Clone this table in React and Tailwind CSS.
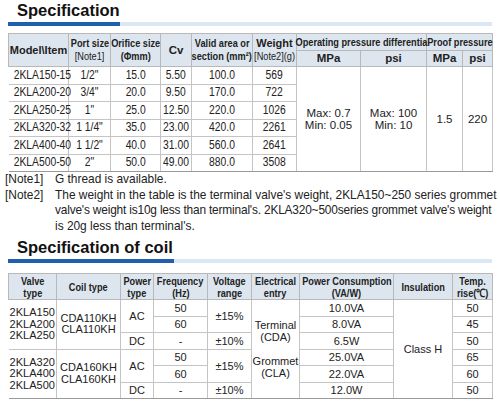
const spec = [
  ['2KLA150-15', '1/2"', '15.0', '5.50', '100.0', '569'],
  ['2KLA200-20', '3/4"', '20.0', '9.50', '170.0', '722'],
  ['2KLA250-25', '1"', '25.0', '12.50', '220.0', '1026'],
  ['2KLA320-32', '1 1/4"', '35.0', '23.00', '420.0', '2261'],
  ['2KLA400-40', '1 1/2"', '40.0', '31.00', '560.0', '2641'],
  ['2KLA500-50', '2"', '50.0', '49.00', '880.0', '3508'],
]

const coilGroups = [
  {
    models: ['2KLA150', '2KLA200', '2KLA250'],
    coils: ['CDA110KH', 'CLA110KH'],
    power: ['10.0VA', '8.0VA', '6.5W'],
    temp: ['50', '45', '50'],
  },
  {
    models: ['2KLA320', '2KLA400', '2KLA500'],
    coils: ['CDA160KH', 'CLA160KH'],
    power: ['25.0VA', '22.0VA', '12.0W'],
    temp: ['65', '60', '50'],
  },
]

// narrow type, like the catalogue's condensed face
function N({ children, className = '' }) {
  return <span className={`inline-block whitespace-nowrap scale-x-[0.8] ${className}`}>{children}</span>
}

function Head({ lines, className = '' }) {
  return (
    <div className={`flex flex-col items-center ${className}`}>
      {lines.map((l, i) => (
        <N key={i}>{l}</N>
      ))}
    </div>
  )
}

function Title({ children, bar }) {
  return (
    <div>
      <h2 className="h-5 pl-[17px] text-[16.5px] font-bold leading-5 text-[#111]">{children}</h2>
      <div className="ml-2 mt-[2px] flex h-1 w-[484px] bg-[#dbe7f3]">
        <div className={`h-full bg-[#1f5fae] ${bar}`} />
      </div>
    </div>
  )
}

const th = 'border border-[#b8b8b8] bg-[#dde6ef] p-0 align-middle font-bold text-[11.5px] text-[#222]'
const td = 'border-x border-b border-[#c4c4c4] p-0 text-center align-middle'

export default function App() {
  return (
    <div className="h-[404px] w-[500px] overflow-hidden bg-white font-['Liberation_Sans',Arial,sans-serif] text-[#222]">
      <Title bar="w-[112px]">Specification</Title>

      <table className="ml-2 mt-[7px] w-[484px] table-fixed border-collapse">
        <colgroup>
          <col className="w-[60px]" />
          <col className="w-[42px]" />
          <col className="w-[50px]" />
          <col className="w-[31px]" />
          <col className="w-[61px]" />
          <col className="w-[44px]" />
          <col className="w-[64px]" />
          <col className="w-[66px]" />
          <col className="w-[36px]" />
          <col className="w-[30px]" />
        </colgroup>
        <thead>
          <tr className="h-[17px] leading-[13px]">
            <th rowSpan={2} className={th}>
              <span className="text-[11px]">Model\Item</span>
            </th>
            <th rowSpan={2} className={th}>
              <div className="flex flex-col items-center">
                <N>Port size</N>
                <N className="font-normal">[Note1]</N>
              </div>
            </th>
            <th rowSpan={2} className={th}>
              <Head lines={['Orifice size', '(Φmm)']} />
            </th>
            <th rowSpan={2} className={th}>
              Cv
            </th>
            <th rowSpan={2} className={th}>
              <Head lines={['Valid area or', 'section (mm²)']} />
            </th>
            <th rowSpan={2} className={th}>
              <div className="flex flex-col items-center">
                <span className="text-[11px]">Weight</span>
                <N className="font-normal">[Note2](g)</N>
              </div>
            </th>
            <th colSpan={2} className={th}>
              <Head lines={['Operating pressure differentia']} />
            </th>
            <th colSpan={2} className={th}>
              <Head lines={['Proof pressure']} />
            </th>
          </tr>
          <tr className="h-[16px] leading-[13px]">
            <th className={th}>MPa</th>
            <th className={th}>psi</th>
            <th className={th}>MPa</th>
            <th className={th}>psi</th>
          </tr>
        </thead>
        <tbody className="text-[12px] leading-[13px]">
          {spec.map((row, i) => (
            <tr key={row[0]} className="h-[17.5px]">
              {row.map((v, j) => (
                <td key={j} className={`${td} ${j === 0 ? 'border-l-0' : ''} ${i === 5 ? 'border-b-[#9a9a9a]' : ''}`}>
                  <N className="scale-x-[0.86]">{v}</N>
                </td>
              ))}
              {i === 0 && (
                <>
                  <td rowSpan={6} className={`${td} border-b-[#9a9a9a] text-[11.5px] leading-[12px]`}>
                    Max: 0.7
                    <br />
                    Min: 0.05
                  </td>
                  <td rowSpan={6} className={`${td} border-b-[#9a9a9a] text-[11.5px] leading-[12px]`}>
                    Max: 100
                    <br />
                    Min: 10
                  </td>
                  <td rowSpan={6} className={`${td} border-b-[#9a9a9a] text-[11.5px]`}>1.5</td>
                  <td rowSpan={6} className={`${td} border-b-[#9a9a9a] text-[11.5px]`}>220</td>
                </>
              )}
            </tr>
          ))}
        </tbody>
      </table>

      <div className="whitespace-nowrap text-[11.9px] leading-[15.5px] text-[#222]">
        <div className="flex">
          <span className="w-[55px] shrink-0 pl-[5px]">[Note1]</span>
          <span>G thread is available.</span>
        </div>
        <div className="flex">
          <span className="w-[55px] shrink-0 pl-[5px]">[Note2]</span>
          <div>
            <div>The weight in the table is the terminal valve's weight, 2KLA150~250 series grommet</div>
            <div className="tracking-[-0.18px]">
              valve's weight is10g less than terminal's. 2KLA320~500series grommet valve's weight
            </div>
            <div>is 20g less than terminal's.</div>
          </div>
        </div>
      </div>

      <div className="mt-[3px]">
        <Title bar="w-[166px]">Specification of coil</Title>
      </div>

      <table className="ml-2 mt-[10px] w-[484px] table-fixed border-collapse">
        <colgroup>
          <col className="w-[48px]" />
          <col className="w-[64px]" />
          <col className="w-[33px]" />
          <col className="w-[54px]" />
          <col className="w-[44px]" />
          <col className="w-[48px]" />
          <col className="w-[94px]" />
          <col className="w-[59px]" />
          <col className="w-[40px]" />
        </colgroup>
        <thead>
          <tr className="h-[26px] leading-[12px]">
            <th className={th}><Head lines={['Valve', 'type']} /></th>
            <th className={th}><Head lines={['Coil type']} /></th>
            <th className={th}><Head lines={['Power', 'type']} /></th>
            <th className={th}><Head lines={['Frequency', '(Hz)']} /></th>
            <th className={th}><Head lines={['Voltage', 'range']} /></th>
            <th className={th}><Head lines={['Electrical', 'entry']} /></th>
            <th className={th}><Head lines={['Power Consumption', '(VA/W)']} /></th>
            <th className={th}><Head lines={['Insulation']} /></th>
            <th className={th}><Head lines={['Temp.', 'rise(℃)']} /></th>
          </tr>
        </thead>
        <tbody className="text-[11px] leading-[12px]">
          {coilGroups.map((g, gi) => {
            const last = gi === 1 ? 'border-b-[#9a9a9a]' : ''
            return [0, 1, 2].map((r) => (
              <tr key={`${gi}-${r}`} className="h-[16.5px]">
                {r === 0 && (
                  <>
                    <td rowSpan={3} className={`${td} border-l-0 whitespace-nowrap leading-[11.5px] ${last}`}>
                      {g.models.map((m) => (
                        <div key={m}>{m}</div>
                      ))}
                    </td>
                    <td rowSpan={3} className={`${td} leading-[11.5px] ${last}`}>
                      {g.coils.map((c) => (
                        <div key={c}>{c}</div>
                      ))}
                    </td>
                    <td rowSpan={2} className={td}>AC</td>
                  </>
                )}
                {r === 2 && <td className={`${td} ${last}`}>DC</td>}
                <td className={`${td} ${r === 2 ? last : ''}`}>{r === 0 ? '50' : r === 1 ? '60' : '-'}</td>
                {r === 0 && <td rowSpan={2} className={td}>±15%</td>}
                {r === 2 && <td className={`${td} ${last}`}>±10%</td>}
                {gi === 0 && r === 0 && (
                  <td rowSpan={6} className={`${td} border-b-[#9a9a9a]`}>
                    Terminal
                    <br />
                    (CDA)
                    <br />
                    <br />
                    Grommet
                    <br />
                    (CLA)
                  </td>
                )}
                <td className={`${td} ${r === 2 ? last : ''}`}>{g.power[r]}</td>
                {gi === 0 && r === 0 && (
                  <td rowSpan={6} className={`${td} border-b-[#9a9a9a]`}>Class H</td>
                )}
                <td className={`${td} ${r === 2 ? last : ''}`}>{g.temp[r]}</td>
              </tr>
            ))
          })}
        </tbody>
      </table>
    </div>
  )
}
